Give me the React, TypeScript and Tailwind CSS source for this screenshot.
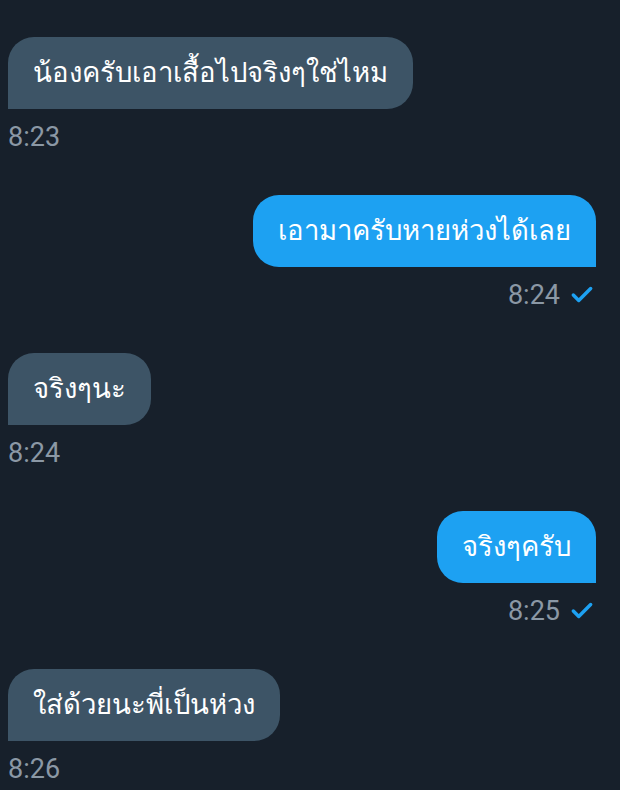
import { Check } from "lucide-react";

const messages = [
  { id: 1, text: "น้องครับเอาเสื้อไปจริงๆใช่ไหม", time: "8:23", mine: false },
  { id: 2, text: "เอามาครับหายห่วงได้เลย", time: "8:24", mine: true },
  { id: 3, text: "จริงๆนะ", time: "8:24", mine: false },
  { id: 4, text: "จริงๆครับ", time: "8:25", mine: true },
  { id: 5, text: "ใส่ด้วยนะพี่เป็นห่วง", time: "8:26", mine: false },
];

export default function App() {
  return (
    <div
      className="min-h-[790px] w-[620px] bg-[#17202b] pt-[37px] overflow-hidden"
      style={{ fontFamily: "Roboto, 'Noto Sans', 'DejaVu Sans', sans-serif" }}
    >
      {messages.map((item) => (
        <div
          key={item.id}
          className={`flex flex-col mb-[45px] ${
            item.mine ? "items-end pr-[24px]" : "items-start pl-[8px]"
          }`}
        >
          <div
            className={`h-[72px] flex items-center px-[25px] text-[27.5px] text-white rounded-[26px] ${
              item.mine ? "bg-[#1da1f2] rounded-br-none" : "bg-[#3d5466] rounded-bl-none"
            }`}
          >
            {item.text}
          </div>
          <div className="mt-[15px] h-[26px] flex items-center text-[27px] text-[#8b98a5]">
            {item.time}
            {item.mine && (
              <Check className="ml-[9px] mr-[1px] w-[26px] h-[26px] text-[#1da1f2]" strokeWidth={3.2} />
            )}
          </div>
        </div>
      ))}
    </div>
  );
}
